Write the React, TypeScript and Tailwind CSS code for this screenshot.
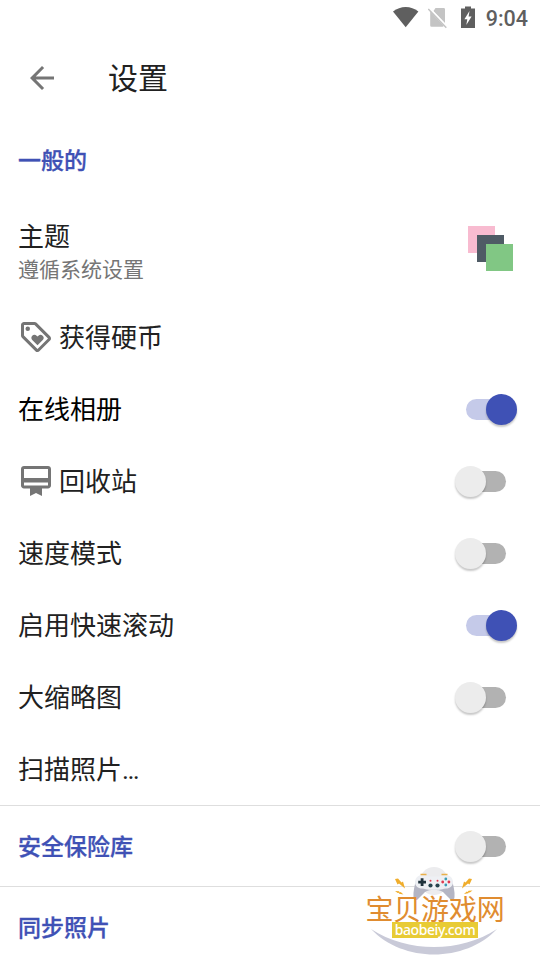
import type { ReactNode } from 'react'
import { MdArrowBack, MdCardMembership, MdOutlineLoyalty } from 'react-icons/md'
import { clsx } from 'clsx'

function StatusBar() {
  return (
    <div className="h-9 flex items-start justify-end pr-3 text-[#5f5f5f]">
      <svg width="26" height="22" viewBox="0 0 26 22" className="mt-[6px] mr-[9px]">
        <path d="M0 5.600C4 2.500 8 1 12.700 1s8.800 1.500 12.700 4.600L12.700 21.200z" fill="#5f5f5f" />
      </svg>
      <svg width="20" height="22" viewBox="0 0 20 22" className="mt-[7px] mr-[13px]">
        <path d="M7.500 1H15.700a1.300 1.300 0 0 1 1.300 1.300V16L5.500 4zM2.200 4.500 15.600 18.700a1.300 1.300 0 0 1-1 1.100H3.500a1.300 1.300 0 0 1-1.300-1.300z" fill="#c4c4c4" />
        <path d="M1.200 1 19.300 20" stroke="#fff" strokeWidth="1.400" />
        <path d="M.3 2 18.300 20.700" stroke="#c4c4c4" strokeWidth="1.500" />
      </svg>
      <svg width="14" height="22" viewBox="0 0 14 22" className="mt-[6px] mr-[11px]">
        <path d="M4 .5h6v2h4V22H0V2.500h4z" fill="#5f5f5f" />
        <path d="M8.500 5 3.400 13.200h2.900L5.300 19l5.300-8.400H7.600z" fill="#fff" />
      </svg>
      <span className="font-[Roboto] font-medium text-[21.500px] leading-[38px]">9:04</span>
    </div>
  )
}

function Switch({ on }: { on?: boolean }) {
  return (
    <span
      className={clsx(
        'flex items-center h-[31px] w-[51px] shrink-0',
        on ? 'mr-[23px]' : 'mr-[34px]',
      )}
    >
      <span
        className={clsx(
          'flex items-center w-[45px] h-[21px] rounded-full',
          on ? 'bg-[#c5cae9] justify-end' : 'bg-[#b2b2b2] ml-[6px]',
        )}
      >
        <span
          className={clsx(
            'w-[31px] h-[31px] shrink-0 rounded-full shadow-[0_2px_2px_rgba(0,0,0,0.22)]',
            on ? 'bg-[#3f51b5] -mr-[6px]' : 'bg-[#ececec] -ml-[6px]',
          )}
        />
      </span>
    </span>
  )
}

interface RowProps {
  label: string
  suffix?: string
  icon?: ReactNode
  control?: ReactNode
  black?: boolean
}

function Row({ label, suffix, icon, control, black }: RowProps) {
  return (
    <div className="h-[72px] pl-[18px] flex items-center">
      {icon && <span className="w-[41px] text-[#757575]">{icon}</span>}
      <span
        className={clsx(
          'flex-1 text-[26px] leading-[38px]',
          suffix ? 'pb-0' : 'pb-[2px]',
          black ? 'text-black' : 'text-[#212121]',
        )}
      >
        {label}
        {suffix && <span className="font-[Roboto]">{suffix}</span>}
      </span>
      {control}
    </div>
  )
}

function SectionTitle({ children }: { children: ReactNode }) {
  return (
    <h2 className="flex-1 pb-[2px] text-[23px] leading-[34px] font-medium text-[#3f51b5] [-webkit-text-stroke:0.3px_#3f51b5]">
      {children}
    </h2>
  )
}

function ThemeSwatches() {
  return (
    <svg width="45" height="45" viewBox="0 0 45 45" className="mr-[27px]">
      <path d="M0 0h27v27H0z" fill="#f8bbd0" />
      <path d="M9 9h27v27H9z" fill="#4f5b65" />
      <path d="M18 18h27v27H18z" fill="#81c784" />
    </svg>
  )
}

function Watermark() {
  return (
    <div className="absolute left-[362px] top-[864px] w-[146px] h-[94px] flex flex-col items-center">
      <svg width="146" height="94" viewBox="0 0 146 94" className="absolute inset-0">
        <circle cx="72" cy="17" r="14" fill="#ececee" />
        {/* gamepad */}
        <path d="M54 16c-1.500 6-3 12-2.500 17 .3 4 3 4 5 1.500L63 28c5-3 13-3 18 0l6.500 6.500c2 2.500 4.700 2.500 5-1.500.5-5-1-11-2.500-17z" fill="#b4b5c3" />
        <path d="M60 11c3 0 4.500 1.600 7 1.600h10c2.500 0 4-1.600 7-1.600a7 7 0 0 1 7 7c0 4-3 6.500-7 6.500-3 0-4.500 1.300-7 1.300H67c-2.500 0-4-1.300-7-1.300-4 0-7-2.500-7-6.500a7 7 0 0 1 7-7z" fill="#eef0f4" />
        <path d="M58.500 10.600h6M79.500 10.600h6" stroke="#e9b04a" strokeWidth="1.500" />
        <path d="M58.700 14.300h2.800v2.500h2.500v2.800h-2.500v2.500h-2.800v-2.500h-2.500v-2.800h2.500z" fill="#20333d" />
        <circle cx="68.500" cy="21.500" r="2.100" fill="#26434e" />
        <circle cx="75.500" cy="21.500" r="2.100" fill="#26434e" />
        <g fill="#e0394e">
          <circle cx="68.500" cy="16.700" r="1" />
          <circle cx="75.500" cy="16.700" r="1" />
          <circle cx="80.700" cy="18" r="1.400" />
          <circle cx="86.900" cy="18" r="1.400" />
        </g>
        <g fill="#399bb5">
          <circle cx="83.800" cy="15" r="1.400" />
          <circle cx="83.800" cy="21" r="1.400" />
        </g>
        {/* sparks */}
        <g fill="#f0ad2b">
          <path d="m33 15 3-.5 3.500 4 1.500-1 2 7-6-5-1.500 1z" />
          <path d="m33 27 4 .3.700 1.200 1-.5 2.800 2.500-4.300-.7-.5-1-1 .2z" />
          <path d="m110 15-3-.5-3.500 4-1.500-1-2 7 6-5 1.500 1z" />
          <path d="m110.500 26.500-4 .3-.7 1.200-1-.5-2.800 2.500 4.300-.7.5-1 1 .2z" />
        </g>
        <path d="M9 65C46 89 98 89 135 65 103 99 41 99 9 65z" fill="#c9cad8" />
      </svg>
      <span className="relative mt-[30px] text-[28px] leading-7 tracking-[-0.2px] whitespace-nowrap text-[#e08c30]">
        宝贝游戏网
      </span>
      <span className="relative w-[86px] h-4 bg-[#e8cb34] text-white text-center font-['Noto_Sans'] font-medium text-[14px] tracking-[-0.4px] leading-[15px]">
        baobeiy.com
      </span>
    </div>
  )
}

export default function App() {
  return (
    <div className="relative w-[540px] h-[960px] overflow-hidden bg-white font-['Noto_Sans_CJK_SC',sans-serif]">
      <StatusBar />

      <header className="h-[84px] flex items-center pl-6">
        <MdArrowBack size={36} className="text-[#757575]" />
        <h1 className="ml-12 pb-[4px] text-[30px] leading-[44px] text-[#212121]">设置</h1>
      </header>

      <div className="h-20 pl-[18px] flex items-center">
        <SectionTitle>一般的</SectionTitle>
      </div>
      <div className="h-[101px] pl-[18px] pt-4 flex items-start">
        <div className="flex-1">
          <div className="text-[26px] leading-[38px] text-[#212121]">主题</div>
          <div className="text-[21px] leading-[29px] text-[#757575]">遵循系统设置</div>
        </div>
        <div className="pt-[10px]">
          <ThemeSwatches />
        </div>
      </div>
      <Row label="获得硬币" icon={<MdOutlineLoyalty size={36} />} />
      <Row label="在线相册" control={<Switch on />} black />
      <Row label="回收站" icon={<MdCardMembership size={36} />} control={<Switch />} />
      <Row label="速度模式" control={<Switch />} />
      <Row label="启用快速滚动" control={<Switch on />} />
      <Row label="大缩略图" control={<Switch />} />
      <Row label="扫描照片" suffix="…" />

      <div className="h-[81px] pl-[18px] flex items-center border-t border-[#dedede]">
        <SectionTitle>安全保险库</SectionTitle>
        <Switch />
      </div>
      <div className="h-[81px] pl-[18px] flex items-center border-t border-[#dedede]">
        <SectionTitle>同步照片</SectionTitle>
      </div>

      <Watermark />
    </div>
  )
}
